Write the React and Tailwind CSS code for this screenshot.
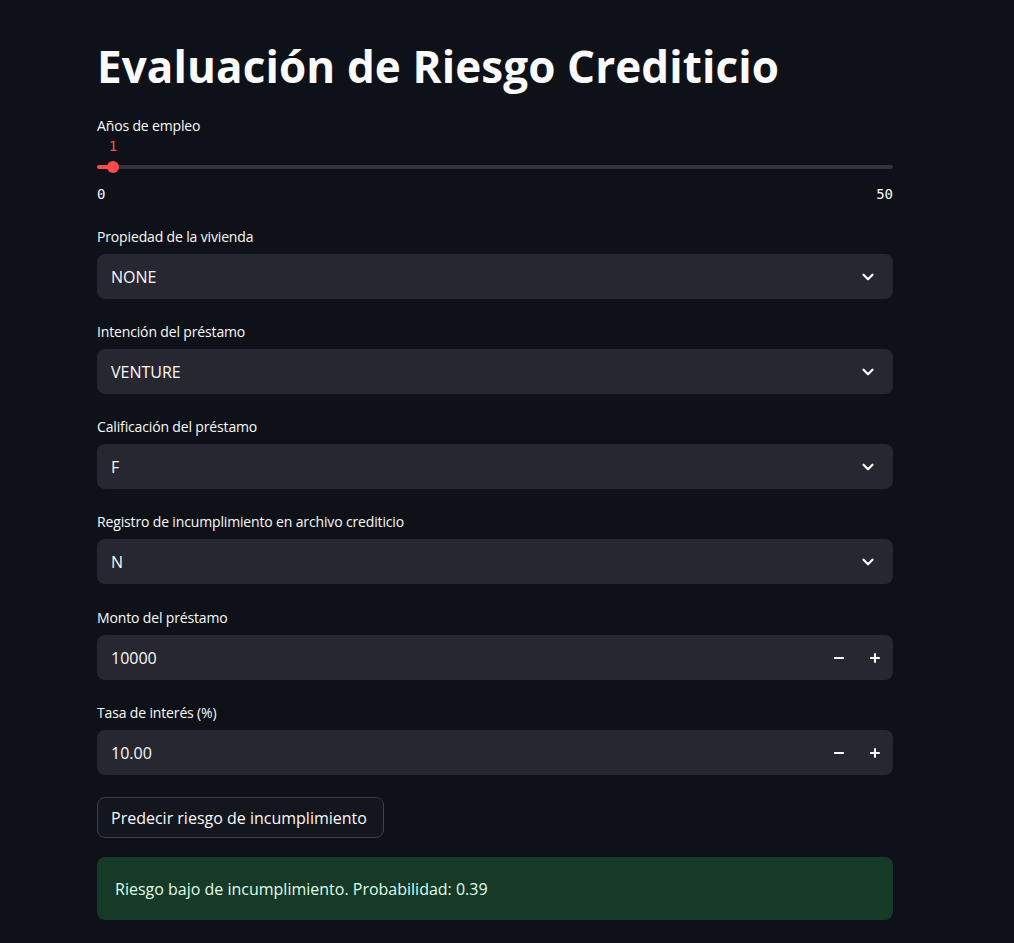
import { ChevronDown, Minus, Plus } from "lucide-react";

const sans = { fontFamily: "'Open Sans', 'Noto Sans', sans-serif" };
const mono = { fontFamily: "'DejaVu Sans Mono', monospace" };

function Label({ children }) {
  return (
    <div className="mb-[6px] flex h-6 items-center text-[14px] tracking-[-0.15px] text-[#fafafa]">
      {children}
    </div>
  );
}

function SelectBox({ label, value }) {
  return (
    <div>
      <Label>{label}</Label>
      <div className="flex h-[45px] items-center justify-between rounded-lg bg-[#262730] pl-[14px] pr-4 text-[16px] text-[#fafafa]">
        <span className="pt-[1px]">{value}</span>
        <ChevronDown className="h-[18px] w-[18px]" strokeWidth={3} />
      </div>
    </div>
  );
}

function NumberBox({ label, value }) {
  return (
    <div>
      <Label>{label}</Label>
      <div className="flex h-[45px] items-center justify-between rounded-lg bg-[#262730] pl-[14px] text-[16px] text-[#fafafa]">
        <span className="pt-[1px]">{value}</span>
        <div className="flex h-full items-center">
          <div className="flex h-full w-9 items-center justify-center">
            <Minus className="h-3.5 w-3.5" strokeWidth={3.5} />
          </div>
          <div className="flex h-full w-9 items-center justify-center">
            <Plus className="h-3.5 w-3.5" strokeWidth={3.5} />
          </div>
        </div>
      </div>
    </div>
  );
}

export default function App() {
  const years = 1;
  const pct = (years / 50) * 100;
  return (
    <div className="min-h-[943px] bg-[#0e1117] pl-[97px]" style={sans}>
      <div className="flex w-[796px] flex-col gap-5 pt-10">
        <h1 className="text-[44px] font-bold leading-[53px] tracking-[0.1px] text-[#fafafa]">
          Evaluación de Riesgo Crediticio
        </h1>

        {/* Slider */}
        <div>
          <Label>Años de empleo</Label>
          <div className="relative h-[41px]">
            <div className="absolute left-0 right-0 top-[22px] h-1 rounded bg-[#31333f]" />
            <div className="absolute left-0 top-[22px] h-1 rounded bg-[#ff4b4b]" style={{ width: `${pct}%` }} />
            <div
              className="absolute top-[18px] h-3 w-3 -translate-x-1/2 rounded-full bg-[#ff4b4b]"
              style={{ left: `${pct}%` }}
            />
            <div
              className="absolute top-[-7px] -translate-x-1/2 text-[14px] leading-5 text-[#ff4b4b]"
              style={{ left: `${pct}%`, ...mono }}
            >
              {years}
            </div>
          </div>
          <div className="flex justify-between text-[14px] leading-5 text-[#fafafa]" style={mono}>
            <span>0</span>
            <span>50</span>
          </div>
        </div>

        <SelectBox label="Propiedad de la vivienda" value="NONE" />
        <SelectBox label="Intención del préstamo" value="VENTURE" />
        <SelectBox label="Calificación del préstamo" value="F" />
        <SelectBox label="Registro de incumplimiento en archivo crediticio" value="N" />
        <div className="pt-[1px]">
          <NumberBox label="Monto del préstamo" value="10000" />
        </div>
        <NumberBox label="Tasa de interés (%)" value="10.00" />

        <div className="pt-[2px]">
          <button className="h-[41px] rounded-lg border border-[#3d3f4a] bg-[#13161d] pl-[13px] pr-[16px] text-[16px] text-[#fafafa]">
            Predecir riesgo de incumplimiento
          </button>
        </div>

        <div className="-mt-[1px] flex h-[63px] items-center rounded-lg bg-[#173928] px-[18px] text-[16px] text-[#dffde9]">
          Riesgo bajo de incumplimiento. Probabilidad: 0.39
        </div>
      </div>
    </div>
  );
}
